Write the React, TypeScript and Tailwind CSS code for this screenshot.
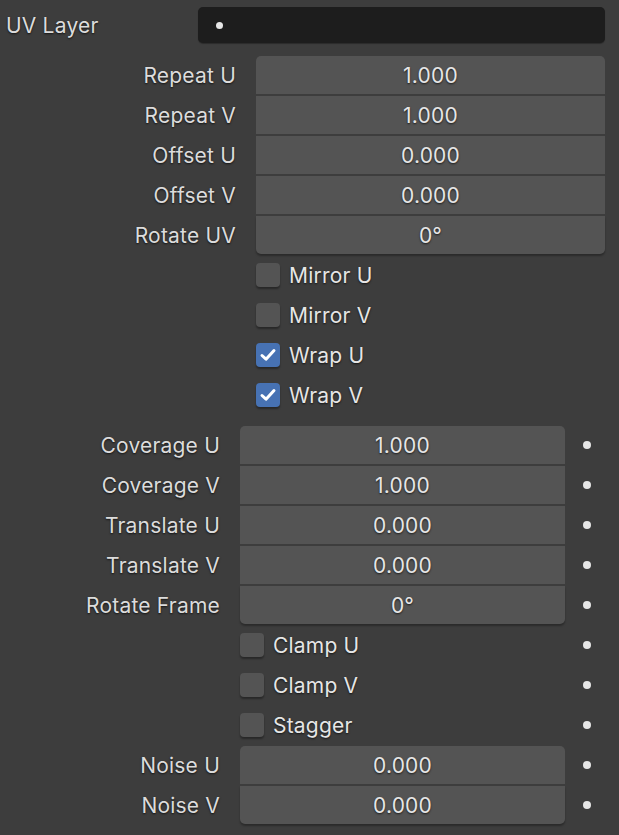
import React from "react";

const font = { fontFamily: "Inter, 'Noto Sans', 'DejaVu Sans', sans-serif" };
const shadow = "[text-shadow:0_1px_2px_rgba(0,0,0,0.7)]";

function Dot({ size = "w-2 h-2" }: { size?: string }) {
  return <span className={`block ${size} rounded-full bg-[#e6e6e6]`} />;
}

function FieldGroup({ rows, labelW, dot }: { rows: [string, string][]; labelW: string; dot?: boolean }) {
  return (
    <div className="flex flex-col gap-[2px]">
      {rows.map(([label, value], i) => (
        <div key={label} className="flex items-center h-[38px]">
          <div className={`${labelW} shrink-0 text-right pr-5 pt-[1px] text-[#dcdcdc] ${shadow}`}>{label}</div>
          <div
            className={`flex-1 h-full flex items-center justify-center pt-[1px] bg-[#545454] text-[#e6e6e6] ${shadow} ${
              i === 0 ? "rounded-t-[5px]" : ""
            } ${i === rows.length - 1 ? "rounded-b-[5px] shadow-[0_2px_2px_rgba(0,0,0,0.3)]" : ""}`}
          >
            {value}
          </div>
          {dot ? (
            <div className="w-[54px] shrink-0 pl-[18px]">
              <Dot />
            </div>
          ) : (
            <div className="w-[14px] shrink-0" />
          )}
        </div>
      ))}
    </div>
  );
}

function Check({ label, checked, labelW, dot }: { label: string; checked?: boolean; labelW: string; dot?: boolean }) {
  return (
    <div className="flex items-center h-10">
      <div className={`${labelW} shrink-0`} />
      <div className="flex-1 flex items-center gap-[9px]">
        <span
          className={`w-6 h-6 rounded-[4px] flex items-center justify-center shadow-[0_2px_2px_rgba(0,0,0,0.35)] ${
            checked ? "bg-[#4772b3]" : "bg-[#545454]"
          }`}
        >
          {checked && (
            <svg width="20" height="20" viewBox="0 0 20 20" fill="none">
              <path d="M4 10.5 L8 14.2 L16 5.5" stroke="#ffffff" strokeWidth="3" strokeLinecap="round" strokeLinejoin="round" />
            </svg>
          )}
        </span>
        <span className={`pt-[1px] text-[#e6e6e6] ${shadow}`}>{label}</span>
      </div>
      {dot ? (
        <div className="w-[54px] shrink-0 pl-[18px]">
          <Dot />
        </div>
      ) : (
        <div className="w-[14px] shrink-0" />
      )}
    </div>
  );
}

export default function App() {
  return (
    <div className="w-[619px] h-[835px] bg-[#3d3d3d] text-[21px] tracking-[0.2px] leading-none overflow-hidden" style={font}>
      <div className="pt-[7px] flex items-center h-[43px]">
        <div className={`w-[198px] shrink-0 pl-[6px] pt-[1px] text-[#dcdcdc] ${shadow}`}>UV Layer</div>
        <div className="flex-1 h-[36px] bg-[#1d1d1d] rounded-[5px] flex items-center pl-[18px] shadow-[0_1px_1px_rgba(0,0,0,0.3)]">
          <Dot size="w-[7px] h-[7px]" />
        </div>
        <div className="w-[14px] shrink-0" />
      </div>

      <div className="mt-[13px]">
        <FieldGroup
          labelW="w-[256px]"
          rows={[
            ["Repeat U", "1.000"],
            ["Repeat V", "1.000"],
            ["Offset U", "0.000"],
            ["Offset V", "0.000"],
            ["Rotate UV", "0°"],
          ]}
        />
      </div>
      <div className="mt-[1px]">
        <Check labelW="w-[256px]" label="Mirror U" />
        <Check labelW="w-[256px]" label="Mirror V" />
        <Check labelW="w-[256px]" label="Wrap U" checked />
        <Check labelW="w-[256px]" label="Wrap V" checked />
      </div>

      <div className="mt-[11px]">
        <FieldGroup
          labelW="w-[240px]"
          dot
          rows={[
            ["Coverage U", "1.000"],
            ["Coverage V", "1.000"],
            ["Translate U", "0.000"],
            ["Translate V", "0.000"],
            ["Rotate Frame", "0°"],
          ]}
        />
      </div>
      <div className="mt-[1px]">
        <Check labelW="w-[240px]" label="Clamp U" dot />
        <Check labelW="w-[240px]" label="Clamp V" dot />
        <Check labelW="w-[240px]" label="Stagger" dot />
      </div>
      <div className="mt-[1px]">
        <FieldGroup
          labelW="w-[240px]"
          dot
          rows={[
            ["Noise U", "0.000"],
            ["Noise V", "0.000"],
          ]}
        />
      </div>
    </div>
  );
}
